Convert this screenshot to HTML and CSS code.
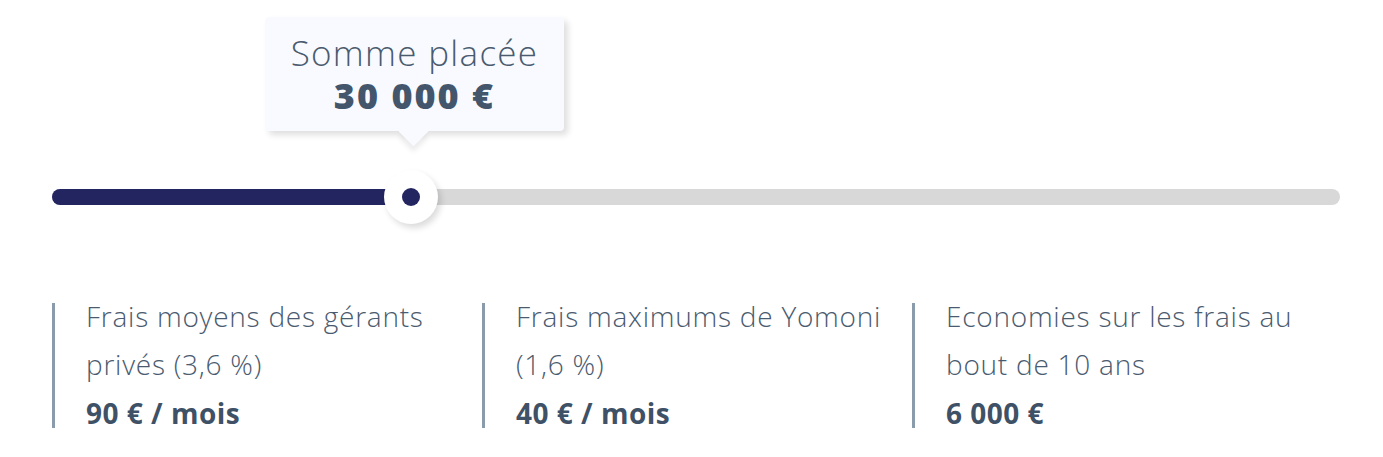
FILE: index.html
```html
<!DOCTYPE html>
<html lang="fr">
<head>
<meta charset="utf-8">
<link rel="stylesheet" href="styles.css">
</head>
<body>
<div class="page">
  <div class="slider">
    <div class="tooltip">
      <div class="tip-label">Somme placée</div>
      <div class="tip-value">30 000 €</div>
      <div class="tip-arrow"></div>
    </div>
    <div class="track">
      <div class="fill" style="width:27.8%"></div>
      <div class="thumb"><span class="dot"></span></div>
    </div>
  </div>
  <div class="stats">
    <div class="stat">
      <div class="stat-label">Frais moyens des gérants privés (3,6 %)</div>
      <div class="stat-value">90 € / mois</div>
    </div>
    <div class="stat">
      <div class="stat-label">Frais maximums de Yomoni (1,6 %)</div>
      <div class="stat-value">40 € / mois</div>
    </div>
    <div class="stat">
      <div class="stat-label">Economies sur les frais au bout de 10 ans</div>
      <div class="stat-value">6 000 €</div>
    </div>
  </div>
</div>
</body>
</html>
```
FILE: styles.css
```css
* { box-sizing: border-box; }
html, body { margin: 0; background: #ffffff; }
body {
  font-family: "Open Sans", "Noto Sans", sans-serif;
  color: #485a6f;
}
.page {
  width: 1288px;
  margin-left: 52px;
}
.slider {
  position: relative;
  padding-top: 189px;
  height: 303px;
}
.track {
  position: relative;
  height: 16px;
  border-radius: 8px;
  background: #d8d8d8;
}
.fill {
  height: 16px;
  border-radius: 8px 0 0 8px;
  background: #22255f;
}
.thumb {
  position: absolute;
  left: 359px;
  top: 50%;
  width: 54px;
  height: 54px;
  margin: -27px 0 0 -27px;
  border-radius: 50%;
  background: #ffffff;
  box-shadow: 3px 4px 6px rgba(0, 0, 0, 0.14);
  display: flex;
  align-items: center;
  justify-content: center;
}
.dot {
  width: 18px;
  height: 18px;
  border-radius: 50%;
  background: #22255f;
}
.tooltip {
  position: absolute;
  left: 213px;
  top: 17px;
  width: 299px;
  height: 114px;
  background: #f8faff;
  border-radius: 4px;
  box-shadow: 4px 4px 6px rgba(0, 0, 0, 0.13);
  text-align: center;
  padding-top: 14px;
  z-index: 2;
}
.tip-arrow {
  position: absolute;
  left: 138px;
  top: 104px;
  width: 21px;
  height: 21px;
  background: #f8faff;
  transform: rotate(45deg);
  box-shadow: 4px 4px 5px rgba(0, 0, 0, 0.08);
  z-index: -1;
}
.tip-label {
  position: relative;
  font-weight: 300;
  font-size: 35px;
  line-height: 44px;
  letter-spacing: 1.3px;
  color: #4a5b6f;
}
.tip-value {
  position: relative;
  font-weight: 800;
  font-size: 36px;
  line-height: 42px;
  letter-spacing: 2px;
  color: #44566b;
}
.stats {
  display: grid;
  grid-template-columns: repeat(3, 430px);
}
.stat {
  border-left: 3px solid #8a9bab;
  padding-left: 31px;
  padding-right: 10px;
  height: 125px;
}
.stat-label {
  font-weight: 300;
  font-size: 28px;
  line-height: 48px;
  letter-spacing: 0.75px;
  margin-top: -11px;
  color: #4a5b6f;
}
.stat-value {
  font-weight: 700;
  font-size: 28px;
  line-height: 44px;
  letter-spacing: 0.5px;
  margin-top: 3px;
  color: #3f5166;
}
```
